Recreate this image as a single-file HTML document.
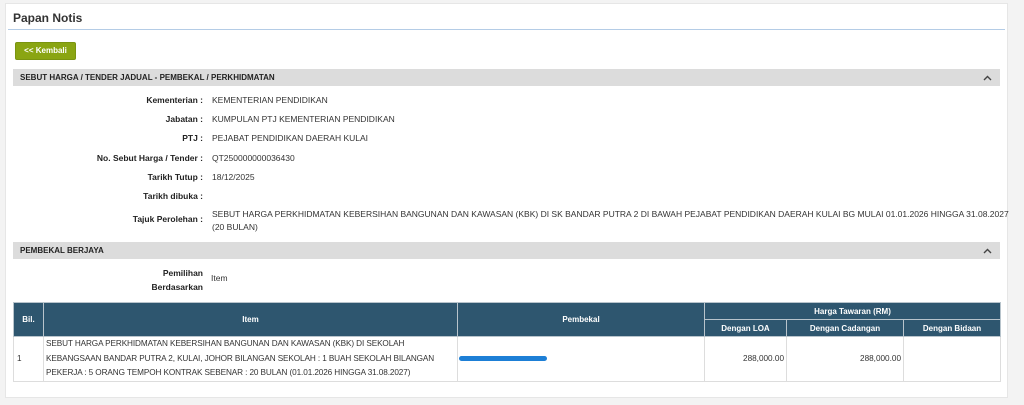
<!DOCTYPE html>
<html><head><style>
*{margin:0;padding:0;box-sizing:border-box}
body{width:1024px;height:405px;background:#f3f3f3;font-family:"Liberation Sans",Arial,sans-serif;font-size:8.5px;color:#333;position:relative;overflow:hidden}
.panel{position:absolute;left:5px;top:3px;width:1003px;height:395px;background:#fff;border:1px solid #e6e6e6}
.title{position:absolute;left:13px;top:11px;font-size:12px;font-weight:bold;color:#333}
.line{position:absolute;left:8px;top:29px;width:997px;height:1px;background:#b4cce6}
.btn{position:absolute;left:15px;top:42px;width:61px;height:18px;background:#8aa512;border:1px solid #7a9410;border-radius:2px;color:#fff;font-weight:bold;font-size:8px;text-align:center;line-height:16px}
.sec{position:absolute;left:13px;width:987px;height:17px;background:#dcdcdc;font-weight:bold;font-size:8px;color:#222;padding-left:7px;line-height:17px}
.sec svg{position:absolute;right:8px;top:6px}
.lab{position:absolute;right:821px;font-weight:bold;text-align:right;color:#222}
.val{position:absolute;left:212px;color:#333;white-space:nowrap}
table{position:absolute;left:13px;top:302px;width:988px;border-collapse:collapse;table-layout:fixed}
th{background:#2e566f;color:#fff;font-size:8px;font-weight:bold;border:1px solid #b8c4cc;height:17px}
td{border:1px solid #ddd;font-size:8.2px;color:#333;vertical-align:middle}
</style></head><body>
<div class="panel"></div>
<div class="title">Papan Notis</div>
<div class="line"></div>
<div class="btn">&lt;&lt; Kembali</div>
<div class="sec" style="top:69px">SEBUT HARGA / TENDER JADUAL - PEMBEKAL / PERKHIDMATAN<svg width="9" height="6" viewBox="0 0 9 6"><path d="M1 5L4.5 1.5L8 5" fill="none" stroke="#444" stroke-width="1.4"/></svg></div>
<div class="lab" style="top:95px">Kementerian :</div><div class="val" style="top:95px">KEMENTERIAN PENDIDIKAN</div>
<div class="lab" style="top:114px">Jabatan :</div><div class="val" style="top:114px">KUMPULAN PTJ KEMENTERIAN PENDIDIKAN</div>
<div class="lab" style="top:133px">PTJ :</div><div class="val" style="top:133px">PEJABAT PENDIDIKAN DAERAH KULAI</div>
<div class="lab" style="top:153px">No. Sebut Harga / Tender :</div><div class="val" style="top:153px">QT250000000036430</div>
<div class="lab" style="top:172px">Tarikh Tutup :</div><div class="val" style="top:172px">18/12/2025</div>
<div class="lab" style="top:191px">Tarikh dibuka :</div>
<div class="lab" style="top:214px">Tajuk Perolehan :</div><div class="val" style="top:208px;line-height:13px">SEBUT HARGA PERKHIDMATAN KEBERSIHAN BANGUNAN DAN KAWASAN (KBK) DI SK BANDAR PUTRA 2 DI BAWAH PEJABAT PENDIDIKAN DAERAH KULAI BG MULAI 01.01.2026 HINGGA 31.08.2027<br>(20 BULAN)</div>
<div class="sec" style="top:242px">PEMBEKAL BERJAYA<svg width="9" height="6" viewBox="0 0 9 6"><path d="M1 5L4.5 1.5L8 5" fill="none" stroke="#444" stroke-width="1.4"/></svg></div>
<div class="lab" style="top:266px;line-height:14px">Pemilihan<br>Berdasarkan</div><div class="val" style="top:273px;left:211px">Item</div>
<table>
<colgroup><col style="width:30px"><col style="width:414px"><col style="width:247px"><col style="width:82px"><col style="width:117px"><col></colgroup>
<tr><th rowspan="2">Bil.</th><th rowspan="2">Item</th><th rowspan="2">Pembekal</th><th colspan="3">Harga Tawaran (RM)</th></tr>
<tr><th>Dengan LOA</th><th>Dengan Cadangan</th><th>Dengan Bidaan</th></tr>
<tr style="height:44px"><td style="padding-left:3px">1</td><td style="padding-left:2px;line-height:14.5px;letter-spacing:-0.1px">SEBUT HARGA PERKHIDMATAN KEBERSIHAN BANGUNAN DAN KAWASAN (KBK) DI SEKOLAH KEBANGSAAN BANDAR PUTRA 2, KULAI, JOHOR BILANGAN SEKOLAH : 1 BUAH SEKOLAH BILANGAN PEKERJA : 5 ORANG TEMPOH KONTRAK SEBENAR : 20 BULAN (01.01.2026 HINGGA 31.08.2027)</td><td><div style="width:88px;height:5px;background:#1d7fd6;border-radius:3px;margin-left:1px"></div></td><td style="text-align:right;padding-right:2px">288,000.00</td><td style="text-align:right;padding-right:2px">288,000.00</td><td></td></tr>
</table>
</body></html>
